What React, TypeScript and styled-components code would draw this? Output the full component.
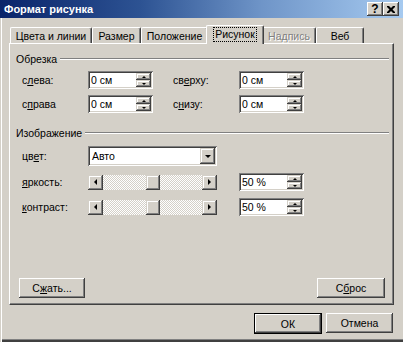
import React from 'react';
import styled, { createGlobalStyle, css } from 'styled-components';

const Global = createGlobalStyle`
  html, body { margin: 0; padding: 0; background: #d4d0c8; }
  body { font-family: "Liberation Sans", Arial, sans-serif; font-size: 10.5px; color: #000; }
  * { box-sizing: border-box; }
`;

const raised = css`
  background: #d4d0c8;
  box-shadow: inset -1px -1px #404040, inset 1px 1px #fff, inset -2px -2px #808080, inset 2px 2px #d4d0c8;
`;
const scrollRaised = css`
  background: #d4d0c8;
  box-shadow: inset -1px -1px #404040, inset 1px 1px #d4d0c8, inset -2px -2px #808080, inset 2px 2px #fff;
`;
const sunken = css`
  box-shadow: inset 1px 1px #808080, inset -1px -1px #fff, inset 2px 2px #404040, inset -2px -2px #d4d0c8;
`;

const Window = styled.div`
  width: 403px;
  height: 342px;
  overflow: hidden;
  display: flex;
  flex-direction: column;
  background: #d4d0c8;
  box-shadow: inset 1px 0 #d4d0c8, inset 2px 0 #fff, inset 0 -2px #404040, inset 0 -3px #808080;
`;

const TitleBar = styled.div`
  height: 18px;
  flex: none;
  display: flex;
  align-items: center;
  padding: 0 4px 0 4px;
  background: linear-gradient(90deg, #0a246a 0%, #2d5393 35%, #6f95c8 65%, #a6caf0 100%);
  color: #fff;
  font-weight: bold;
  font-size: 11px;
`;

const Title = styled.span`
  flex: 1;
  white-space: nowrap;
`;

const CaptionButton = styled.div`
  width: 16px;
  height: 14px;
  ${raised};
  display: flex;
  align-items: center;
  justify-content: center;
  color: #000;
  font-weight: bold;
  font-size: 12px;
  line-height: 1;
`;

const Body = styled.div`
  flex: 1;
  display: flex;
  flex-direction: column;
  padding: 7px 9px 0 9px;
`;

const TabStrip = styled.div`
  height: 18px;
  flex: none;
  display: flex;
  align-items: flex-end;
  padding-left: 1px;
  position: relative;
  z-index: 1;
`;

const Tab = styled.div<{ $w: number; $active?: boolean; $disabled?: boolean }>`
  width: ${(p) => p.$w + (p.$active ? 4 : 0)}px;
  height: ${(p) => (p.$active ? 19 : 16)}px;
  margin: ${(p) => (p.$active ? '0 -2px -1px -2px' : '0')};
  position: relative;
  z-index: ${(p) => (p.$active ? 2 : 1)};
  background: #d4d0c8;
  border-top: 1px solid #fff;
  border-left: 1px solid #fff;
  border-right: 1px solid #404040;
  border-top-left-radius: 2px;
  border-top-right-radius: 2px;
  box-shadow: inset -1px 0 #808080;
  display: flex;
  justify-content: center;
  align-items: ${(p) => (p.$active ? 'flex-start' : 'center')};
  padding-top: ${(p) => (p.$active ? '2px' : '0')};
  white-space: nowrap;
  color: ${(p) => (p.$disabled ? '#808080' : '#000')};
  text-shadow: ${(p) => (p.$disabled ? '1px 1px #fff' : 'none')};
`;

const Focus = styled.span`
  outline: 1px dotted #000;
  padding: 0 1px;
  line-height: 13px;
`;

const Panel = styled.div`
  width: 385px;
  height: 262px;
  flex: none;
  border-top: 1px solid #fff;
  border-left: 1px solid #fff;
  border-right: 1px solid #404040;
  border-bottom: 1px solid #404040;
  box-shadow: inset -1px -1px #808080;
  display: flex;
  flex-direction: column;
  padding: 8px 4px 0 6px;
`;

const GroupHeader = styled.div<{ $top?: number }>`
  height: 14px;
  display: flex;
  align-items: center;
  margin-top: ${(p) => p.$top ?? 0}px;
`;

const GroupLine = styled.div`
  flex: 1;
  height: 2px;
  margin-left: 3px;
  border-top: 1px solid #808080;
  border-bottom: 1px solid #fff;
`;

const CropGrid = styled.div`
  display: grid;
  grid-template-columns: 66px 85px 66px 65px;
  grid-auto-rows: 18px;
  row-gap: 6px;
  margin: 5px 0 0 6px;
  align-items: center;
  justify-items: start;
`;

const Label = styled.span`
  white-space: nowrap;
`;

const SpinBox = styled.div`
  width: 65px;
  height: 18px;
  display: flex;
  background: #fff;
  padding: 2px;
  ${sunken};
`;

const SpinText = styled.span`
  flex: 1;
  padding-left: 1px;
  line-height: 14px;
  white-space: nowrap;
`;

const SpinButtons = styled.div`
  width: 15px;
  display: flex;
  flex-direction: column;
`;

const SpinHalf = styled.div`
  flex: 1;
  ${scrollRaised};
  display: flex;
  align-items: center;
  justify-content: center;
`;

const Arrow = styled.span<{ $dir: 'up' | 'down' | 'left' | 'right'; $s?: number }>`
  width: 0;
  height: 0;
  border-style: solid;
  ${(p) => {
    const s = p.$s ?? 2;
    switch (p.$dir) {
      case 'up':
        return `border-width: 0 ${s}px ${s}px ${s}px; border-color: transparent transparent #000 transparent;`;
      case 'down':
        return `border-width: ${s}px ${s}px 0 ${s}px; border-color: #000 transparent transparent transparent;`;
      case 'left':
        return `border-width: ${s}px ${s}px ${s}px 0; border-color: transparent #000 transparent transparent;`;
      default:
        return `border-width: ${s}px 0 ${s}px ${s}px; border-color: transparent transparent transparent #000;`;
    }
  }}
`;

const ImageGrid = styled.div`
  display: grid;
  grid-template-columns: 66px 151px 65px;
  grid-template-rows: 20px 18px 18px;
  row-gap: 7px;
  margin: 6px 0 0 6px;
  align-items: center;
  justify-items: start;
`;

const Select = styled.div`
  width: 129px;
  height: 20px;
  display: flex;
  background: #fff;
  padding: 2px;
  ${sunken};
`;

const SelectText = styled.span`
  flex: 1;
  padding-left: 2px;
  line-height: 16px;
`;

const SelectButton = styled.div`
  width: 15px;
  ${scrollRaised};
  display: flex;
  align-items: center;
  justify-content: center;
`;

const Slider = styled.div`
  width: 129px;
  height: 15px;
  display: flex;
`;

const ScrollBtn = styled.div`
  width: 15px;
  height: 15px;
  flex: none;
  ${scrollRaised};
  display: flex;
  align-items: center;
  justify-content: center;
`;

const Track = styled.div<{ $grow: number }>`
  flex: ${(p) => p.$grow} 1 0;
  background: repeating-conic-gradient(#fff 0 25%, #d4d0c8 0 50%) 0 0 / 2px 2px;
`;

const Thumb = styled.div`
  width: 14px;
  height: 15px;
  flex: none;
  ${scrollRaised};
`;

const PanelButtons = styled.div`
  margin-top: auto;
  margin-bottom: 6px;
  display: flex;
  justify-content: space-between;
  padding: 0 4px 0 3px;
`;

const Button = styled.div<{ $w: number; $default?: boolean }>`
  width: ${(p) => p.$w}px;
  height: ${(p) => (p.$default ? 21 : 20)}px;
  display: flex;
  align-items: center;
  justify-content: center;
  ${raised};
  ${(p) =>
    p.$default &&
    css`
      border: 1px solid #000;
      box-shadow: inset -1px -1px #404040, inset 1px 1px #fff, inset -2px -2px #808080;
    `}
`;

const Footer = styled.div`
  display: flex;
  justify-content: flex-end;
  gap: 4px;
  margin-top: 8px;
  padding-right: 1px;
`;

const Cross = () => (
  <svg width="8" height="7" viewBox="0 0 8 7">
    <path d="M0 0h2l2 2 2-2h2v1L5.5 3.5 8 6v1H6L4 5 2 7H0V6l2.5-2.5L0 1z" fill="#000" />
  </svg>
);

const Spin = ({ value }: { value: string }) => (
  <SpinBox>
    <SpinText>{value}</SpinText>
    <SpinButtons>
      <SpinHalf>
        <Arrow $dir="up" />
      </SpinHalf>
      <SpinHalf>
        <Arrow $dir="down" />
      </SpinHalf>
    </SpinButtons>
  </SpinBox>
);

const ScrollSlider = ({ value }: { value: number }) => (
  <Slider>
    <ScrollBtn>
      <Arrow $dir="left" $s={3} />
    </ScrollBtn>
    <Track $grow={value} />
    <Thumb />
    <Track $grow={100 - value} />
    <ScrollBtn>
      <Arrow $dir="right" $s={3} />
    </ScrollBtn>
  </Slider>
);

const tabs = [
  { label: 'Цвета и линии', w: 82 },
  { label: 'Размер', w: 49 },
  { label: 'Положение', w: 67 },
  { label: 'Рисунок', w: 54, active: true },
  { label: 'Надпись', w: 54, disabled: true },
  { label: 'Веб', w: 48 },
];

export default function App() {
  return (
    <>
      <Global />
      <Window>
        <TitleBar>
          <Title>Формат рисунка</Title>
          <CaptionButton>?</CaptionButton>
          <CaptionButton>
            <Cross />
          </CaptionButton>
        </TitleBar>
        <Body>
          <TabStrip>
            {tabs.map((t) => (
              <Tab key={t.label} $w={t.w} $active={t.active} $disabled={t.disabled}>
                {t.active ? <Focus>{t.label}</Focus> : t.label}
              </Tab>
            ))}
          </TabStrip>
          <Panel>
            <GroupHeader>
              <Label>Обрезка</Label>
              <GroupLine />
            </GroupHeader>
            <CropGrid>
              <Label>
                с<u>л</u>ева:
              </Label>
              <Spin value="0 см" />
              <Label>
                св<u>е</u>рху:
              </Label>
              <Spin value="0 см" />
              <Label>
                с<u>п</u>рава
              </Label>
              <Spin value="0 см" />
              <Label>
                с<u>н</u>изу:
              </Label>
              <Spin value="0 см" />
            </CropGrid>
            <GroupHeader $top={13}>
              <Label>Изображение</Label>
              <GroupLine />
            </GroupHeader>
            <ImageGrid>
              <Label>
                цв<u>е</u>т:
              </Label>
              <Select>
                <SelectText>Авто</SelectText>
                <SelectButton>
                  <Arrow $dir="down" $s={3} />
                </SelectButton>
              </Select>
              <span />
              <Label>
                <u>я</u>ркость:
              </Label>
              <ScrollSlider value={50} />
              <Spin value="50 %" />
              <Label>
                <u>к</u>онтраст:
              </Label>
              <ScrollSlider value={50} />
              <Spin value="50 %" />
            </ImageGrid>
            <PanelButtons>
              <Button $w={66}>
                <span>
                  С<u>ж</u>ать...
                </span>
              </Button>
              <Button $w={68}>
                <span>
                  С<u>б</u>рос
                </span>
              </Button>
            </PanelButtons>
          </Panel>
          <Footer>
            <Button $w={68} $default>
              ОК
            </Button>
            <Button $w={67}>Отмена</Button>
          </Footer>
        </Body>
      </Window>
    </>
  );
}
